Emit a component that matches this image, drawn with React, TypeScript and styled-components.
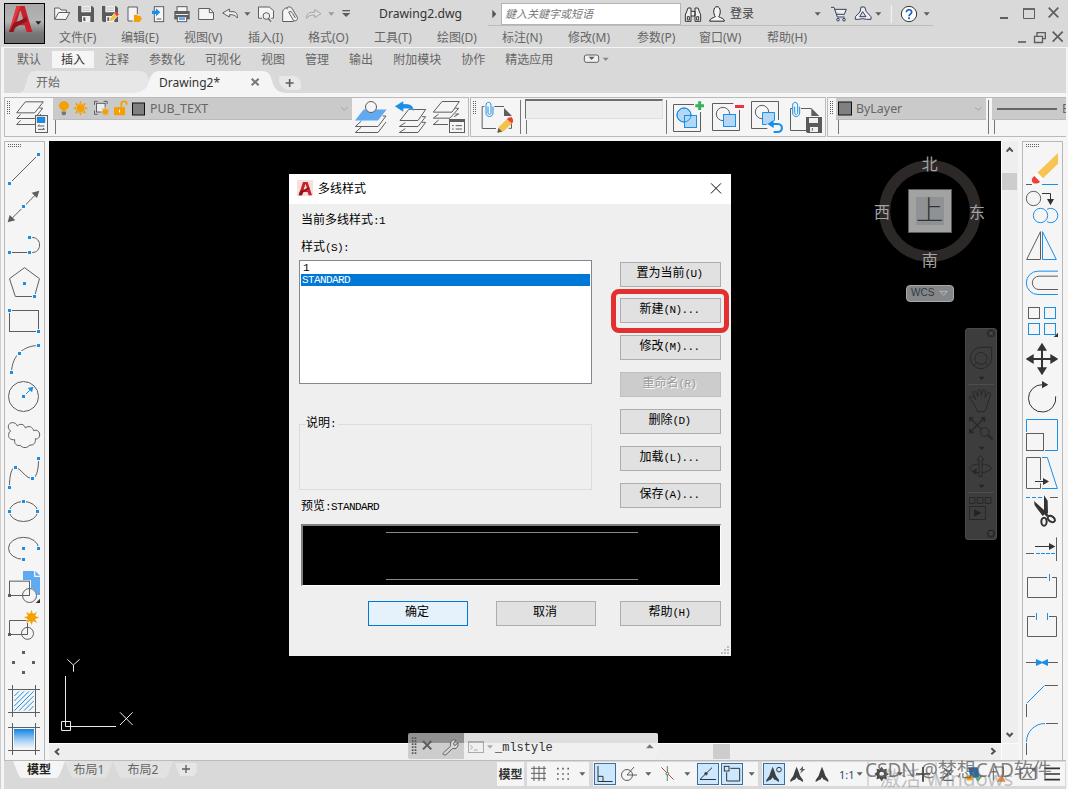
import React from 'react';
import styled, { createGlobalStyle, css } from 'styled-components';

const UI = '"Noto Sans", "Open Sans", "Noto Sans CJK SC", sans-serif';
const INK = '#5e5e5e';
const BLUE = '#1a8fe8';
const ORANGE = '#f4a000';
const DARK = '#333';

const Global = createGlobalStyle`
  html, body { margin: 0; padding: 0; }
  body { width: 1068px; height: 789px; overflow: hidden; background: #d9d9d9; font-family: ${UI}; font-size: 12px; color: #666; }
  *, *::before, *::after { box-sizing: border-box; }
`;

/* ---------- icon helpers: drawings use three units per pixel ---------- */

const Svg = styled.svg`
  display: block;
  flex: none;
  fill: none;
  stroke: ${INK};
  stroke-width: 3;
  overflow: visible;
`;

const Glyph = ({ box, children }: { box: string; children?: React.ReactNode }) => {
  const [, , w, h] = box.split(' ').map(Number);
  return (
    <Svg viewBox={box} width={w / 3} height={h / 3}>
      {children}
    </Svg>
  );
};

const Dot = ({ x, y, c = BLUE }: { x: number; y: number; c?: string }) => (
  <>
    <rect x={x - 7.5} y={y - 7.5} width="15" height="15" fill="#f5f5f5" stroke="none" />
    <rect x={x - 4.5} y={y - 4.5} width="9" height="9" fill={c} stroke="none" />
  </>
);

const Fill = ({ d, c = DARK }: { d: string; c?: string }) => <path d={d} fill={c} stroke="none" />;

const star = (cx: number, cy: number, outer: number, inner: number, n: number) =>
  Array.from({ length: n * 2 }, (_, i) => {
    const r = i % 2 ? inner : outer;
    const a = (Math.PI * i) / n - Math.PI / 2;
    return `${cx + r * Math.cos(a)},${cy + r * Math.sin(a)}`;
  }).join(' ');

const Caret = ({ x, y, c = INK }: { x: number; y: number; c?: string }) => (
  <Fill d={`M${x - 9} ${y - 5} H${x + 9} L${x} ${y + 5} Z`} c={c} />
);

/* ---------- title bar ---------- */

const Shell = styled.div`
  display: flex;
  flex-direction: column;
  width: 1068px;
  height: 789px;
  overflow: hidden;
`;
const TitleBar = styled.header`
  display: flex;
  height: 47px;
  background: #d9d9d9;
`;
const AppButton = styled.div`
  flex: none;
  width: 41px;
  height: 41px;
  margin: 3px 5px 0 4px;
  border: 1px solid #000;
  background: linear-gradient(#a9a9a9, #b4b4b4 45%, #777 75%, #6e6e6e);
`;
const TitleRows = styled.div`
  flex: 1;
  display: flex;
  flex-direction: column;
`;
const Row = styled.div<{ $h: number }>`
  display: flex;
  height: ${(p) => p.$h}px;
`;
const FileTitle = styled.div`
  width: 134px;
  padding-left: 25px;
  line-height: 27px;
  font-size: 12.2px;
  color: #333;
`;
const InfoCenter = styled.div`
  display: flex;
  width: 445px;
  height: 26px;
  border-bottom: 1px solid #bcbcbc;
`;
const Search = styled.div`
  width: 180px;
  height: 22px;
  margin-top: 3px;
  padding-left: 3px;
  border: 1px solid #b4b4b4;
  background: #fff;
  line-height: 19px;
  font-size: 11px;
  font-style: italic;
  color: #777;
`;
const SignIn = styled.span`
  width: 27px;
  line-height: 27px;
  color: #444;
`;
const MenuRow = styled.nav`
  display: grid;
  grid-template-columns: 62px 63px 64px 60px 66px 63px 65px 66px 69px 62px 68px 60px;
  padding-left: 9px;
  line-height: 20px;
`;
const Push = styled.div`
  margin-left: auto;
  display: flex;
`;

const Floppy = ({ x }: { x: number }) => (
  <g transform={`translate(${x} 0)`} stroke="none">
    <path d="M0 18 H42 L48 24 V66 H4 L0 62 Z" fill="#5a5a5a" />
    <path d="M10 18 H39 V37 H10 Z M12 48 H37 V66 H12 Z" fill="#f0f0f0" />
    <path d="M13 24 H36 M13 31 H36" stroke="#aaa" strokeWidth="2" />
    <path d="M16 52 H22 V63 H16 Z" fill="#5a5a5a" />
  </g>
);

const QuickAccess = () => (
  <>
    <Glyph box="150 0 72 84">
      <path d="M164 57 V24 H178 L183 30 H199 V37 M164 58 L176 37.5 H209 L198 58.5 Z" fill="#f5f5f5" />
    </Glyph>
    <Glyph box="222 0 72 84"><Floppy x={234} /></Glyph>
    <Glyph box="294 0 72 84">
      <Floppy x={306} />
      <path d="M330 66 L329 56 L345 38 L355 46 L339 63 Z" fill="#f7c14e" stroke="#fff" strokeWidth="2" />
      <Fill d="M343 40 L349 35 L357 43 L351 49 Z" c="#ee4036" />
    </Glyph>
    <Glyph box="366 0 72 84">
      <path d="M412 42 V21 H384 V63 H398" fill="#f5f5f5" />
      <path d="M402 66 V44 H411 L414 48 H422 V54 M402 66 L409 53 H427 L419 66 Z" fill={ORANGE} stroke="none" />
    </Glyph>
    <Glyph box="438 0 72 84">
      <rect x="463" y="20" width="28" height="45" fill="#f5f5f5" />
      <path d="M470 57 H484" />
      <Fill d="M456 32 H468 V25 L481 37 L468 49 V42 H456 Z" c={BLUE} />
    </Glyph>
    <Glyph box="510 0 72 84">
      <rect x="531" y="20" width="30" height="16" fill="#f5f5f5" />
      <Fill d="M523 33 H569 V58 H523 Z" c={INK} />
      <Fill d="M527 42 H565 V45 H527 Z" c="#eee" />
      <rect x="532" y="50" width="28" height="15" fill="#f5f5f5" />
      <Fill d="M537 52 H555 V60 H537 Z" c="#5faaf0" />
    </Glyph>
    <Glyph box="582 0 72 84">
      <path d="M596 25.5 H629 L640.500 37 V58.5 H596 Z" fill="#f5f5f5" />
      <path d="M628 25 V38 H641" />
    </Glyph>
    <Glyph box="654 0 72 84">
      <path d="M668 39 L688 27 V35 H699 C710 36 713 43 712 54 C707 46 701 44 688 44 V51 Z" fill="#eee" />
    </Glyph>
    <Glyph box="726 0 36 84"><Caret x={742} y={42} /></Glyph>
    <Glyph box="762 0 72 84">
      <path d="M786 54.500 H775.500 V21 H808 L820.500 32 V54.500 H814" fill="#f5f5f5" />
      <circle cx="799" cy="48" r="10" fill="#eee" />
      <path d="M805 56 L813 65" strokeWidth="4" />
    </Glyph>
    <Glyph box="834 0 72 84">
      <path d="M848 33 V64.500 H880 V33 L870 24 H856 Z" fill="#f5f5f5" />
      <path d="M862 28 C858 20 870 18 876 25 L892 52 C894 62 884 66 879 59 L866 36 C870 32 876 36 878 40 L886 54" fill="#eee" />
    </Glyph>
    <Glyph box="906 0 75 84">
      <path d="M963 41 L944 29 V37 H934 C924 38 919 44 920 55 C925 47 931 45 944 45 V53 Z" fill="#ddd" stroke="#a6a6a6" />
    </Glyph>
    <Glyph box="981 0 36 84"><Caret x={994} y={42} c="#999" /></Glyph>
    <Glyph box="1017 0 45 84">
      <path d="M1027 32 H1050" strokeWidth="4" />
      <Fill d="M1026 39 H1051 L1038.500 51 Z" c={INK} />
    </Glyph>
  </>
);

const LogoA = ({ box }: { box: string }) => (
  <Glyph box={box}>
    <Fill d="M27 96 L50 18 H74 L97 96 H80 L74 76 H47 L40 96 Z" c="#c9202a" />
    <Fill d="M60 32 L50 66 C58 62 66 60 72 66 L62 32 Z" c="#a5a5a5" />
    <Fill d="M27 96 L34 74 C44 66 62 64 78 50 L82 62 C64 74 48 78 44 86 L40 96 Z" c="#8e161c" />
    <Fill d="M50 18 H62 L38 74 L27 96 Z" c="#e4383c" />
    <Caret x={115} y={69} c="#222" />
  </Glyph>
);

const menus = ['文件(F)', '编辑(E)', '视图(V)', '插入(I)', '格式(O)', '工具(T)', '绘图(D)', '标注(N)', '修改(M)', '参数(P)', '窗口(W)', '帮助(H)'];

const Title = () => (
  <TitleBar>
    <AppButton>
      <LogoA box="15 12 117 117" />
    </AppButton>
    <TitleRows>
      <Row $h={28}>
        <QuickAccess />
        <FileTitle>Drawing2.dwg</FileTitle>
        <InfoCenter>
          <Glyph box="414 0 39 75"><Fill d="M427 29 L439 42 L427 55 Z" c="#555" /></Glyph>
          <Search>鍵入关鍵字或短语</Search>
          <Glyph box="993 0 66 75">
            <g stroke="#333">
              <path d="M1006 64 V45 L1014 24 H1023 V64 Z M1035 64 V24 H1044 L1052 45 V64 Z M1023 34 H1035 V48 H1023" fill="#eee" />
              <path d="M1012 50 H1018 V60 H1012 Z M1040 50 H1046 V60 H1040 Z" fill="#fff" />
            </g>
          </Glyph>
          <Glyph box="-15 0 81 75">
            <path d="M5 63.500 C5 55 16 54 22 50 C15 42 15 20 27 20 C39 20 39 42 32 50 C38 54 49 55 49 63.500 Z" fill="#f4f4f4" stroke="#222" />
          </Glyph>
          <SignIn>登录</SignIn>
          <Glyph box="147 0 213 75"><Caret x={329} y={42} /></Glyph>
          <Glyph box="360 0 72 75">
            <g stroke="#34405e">
              <path d="M369 22 H378 L388 51 H410 M380 28 H415 L409 43 H386" fill="#eee" />
              <circle cx="390" cy="59" r="4" /><circle cx="408" cy="59" r="4" />
            </g>
          </Glyph>
          <Glyph box="432 0 120 75">
            <path d="M459 21 H470 L475 35 L489 50 V58 H476 L464 56 L452 58 H442 V50 L456 36 Z M464 35 L455 50 H474 Z" stroke="#34405e" fill="#eee" />
            <Caret x={511} y={42} />
            <path d="M550 15 V69" stroke="#f5f5f5" />
          </Glyph>
          <Glyph box="552 0 123 75">
            <circle cx="603" cy="42" r="23" fill="#fff" stroke="#333" />
            <path d="M595 37 C595 26 612 27 611 37 C610 43 603 42 603 49 M603 52 V58" stroke="#1a5fc0" strokeWidth="5" />
            <Caret x={656} y={42} />
          </Glyph>
        </InfoCenter>
        <Push>
          <Glyph box="867 0 213 84">
            <path d="M876 54 H900" strokeWidth="6" />
            <path d="M946.500 27 H979.500 V55.500 H946.500 Z" />
            <path d="M945 27 H981" strokeWidth="5" />
            <path d="M1022 23 L1051 52 M1051 23 L1022 52" strokeWidth="5" />
          </Glyph>
        </Push>
      </Row>
      <Row $h={19}>
        <MenuRow>{menus.map((m) => <span key={m}>{m}</span>)}</MenuRow>
        <Push>
          <Glyph box="921 84 159 57">
            <path d="M930 126 H954" strokeWidth="5" />
            <path d="M987 108 V98 H1012 V116 H1003 M979.500 109 H1003.500 V127.500 H979.500 Z" strokeWidth="4" />
            <path d="M1034 95 L1064 125 M1064 95 L1034 125" strokeWidth="5" />
          </Glyph>
        </Push>
      </Row>
    </TitleRows>
  </TitleBar>
);

/* ---------- ribbon and document tabs ---------- */

const Frame = styled.div`
  flex: 1;
  display: flex;
  flex-direction: column;
  padding: 1px 2px 0 3px;
  border-left: 1px solid #cfcfcf;
  background: #f5f5f5;
`;
const Ribbon = styled.nav`
  display: flex;
  height: 23px;
  padding: 3px 0 0 3px;
  background: #d9d9d9;
`;
const RibbonTab = styled.span<{ $on?: boolean }>`
  height: 17px;
  padding: 0 9px;
  margin: 0 1px;
  line-height: 17px;
  color: ${(p) => (p.$on ? '#333' : '#666')};
  background: ${(p) => (p.$on ? '#f5f5f5' : 'transparent')};
`;
const DocTabs = styled.div`
  display: flex;
  height: 22px;
  padding-left: 14px;
  background: #d9d9d9;
`;
const DocTab = styled.div<{ $on?: boolean }>`
  display: flex;
  height: 22px;
  line-height: 23px;
  ${(p) =>
    p.$on
      ? css`
          width: 159px;
          margin-left: -21px;
          padding-left: 28px;
          font-size: 12px;
          color: #333;
          background: #f5f5f5;
          clip-path: path('M0 22 C14 22 16 16 18 10 C20 4 22 0 29 0 H131 C140 0 140 8 142 13 C145 20 148 22 159 22 Z');
        `
      : css`
          width: 134px;
          padding-left: 18px;
          background: #e7e7e7;
          clip-path: path('M0 22 C6 22 7 16 9 9 C11 3 12 0 19 0 H121 C128 0 131 4 131 12 L134 22 Z');
        `}
`;
const NewTab = styled.div`
  width: 22px;
  height: 14px;
  margin: 5px 0 0 -11px;
  background: #e8e8e8;
  border-radius: 2px 8px 3px 10px;
`;

/* ---------- toolbar strip ---------- */

const Strip = styled.div`
  display: flex;
  gap: 1px;
  height: 40px;
  margin-top: 4px;
`;
const Bar = styled.div<{ $w: number; $open?: boolean }>`
  display: flex;
  width: ${(p) => p.$w}px;
  border: 1px solid #bababa;
  ${(p) => p.$open && 'border-right: 0;'}
  overflow: hidden;
`;
const Combo = styled.div<{ $w: number }>`
  flex: none;
  display: flex;
  align-items: center;
  width: ${(p) => p.$w}px;
  height: 22px;
  background: #cacaca;
  border-bottom: 1px solid #bbb;
  font-size: 12.4px;
`;
const ComboCell = styled.div`
  flex: none;
  &::after {
    content: '';
    display: block;
    height: 14px;
    margin-left: 2px;
    border-left: 1px solid #777;
  }
`;
const Field = styled.div`
  width: 138px;
  height: 20px;
  margin-top: 1px;
  border: 1px solid #dedede;
  border-top: 2px solid #707070;
  border-left: 1px solid #707070;
  background: #ededed;
`;
const FieldCell = styled.div`
  margin-left: 4px;
  &::after {
    content: '';
    display: block;
    height: 14px;
    margin: 1px 0 0 1px;
    border-left: 1px solid #777;
  }
`;
const Divider = styled.i<{ $l: number; $r: number }>`
  flex: none;
  width: 1px;
  height: 34px;
  margin: 2px ${(p) => p.$r}px 0 ${(p) => p.$l}px;
  background: #777;
`;
const Label = styled.span<{ $ml?: number }>`
  margin-left: ${(p) => p.$ml ?? 0}px;
`;

const GripV = ({ w }: { w: number }) => (
  <Glyph box={`0 0 ${w} 114`}>
    <path d="M7.500 9 V48 M13.500 9 V48" strokeDasharray="3 3" />
  </Glyph>
);

const Sheets = ({ x, y }: { x: number; y: number }) => (
  <g transform={`translate(${x} ${y})`}>
    <path d="M26 1.500 H80 L54 34.500 H0 Z" fill="#f5f5f5" />
    <path d="M68 20 L78 20.500 L54 51.500 H0 L12 39 M72 38 L54 69.500 H0 L12 57" />
  </g>
);

const Clip = ({ x, y }: { x: number; y: number }) => (
  <path
    transform={`translate(${x} ${y})`}
    d="M6 14 V32 C6 39 15 39 15 32 V10 C15 -2 0 -2 0 10 V33 C0 47 21 47 21 33 V14"
    stroke={BLUE}
    fill="none"
  />
);

const Toolbars = () => (
  <Strip>
    <Bar $w={465}>
      <Glyph box="15 294 30 114">
        <path d="M22.500 303 V342 M28.500 303 V342" strokeDasharray="3 3" />
      </Glyph>
      <Glyph box="45 294 114 114">
        <Sheets x={50} y={304} />
        <rect x="106.500" y="346.500" width="36" height="51" fill="#f5f5f5" />
        <rect x="112" y="352" width="22" height="15" fill={BLUE} stroke="#1877c8" />
        <path d="M114 378 H133 M118 374 L113 378 M114 388 H133 M129 384 L134 388" />
      </Glyph>
      <ComboCell>
        <Combo $w={299}>
          <Glyph box="159 295.500 291 63">
            <path d="M186 334 C186 328 177 327 177 320 C177 300 207 300 207 320 C207 327 198 328 198 334 Z" fill={ORANGE} stroke="none" />
            <Fill d="M185 336 H198 V343 L195 347 H188 L185 343 Z" c="#777" />
            <polygon points={star(241.5, 326, 23, 13, 8)} fill={ORANGE} stroke="none" />
            <circle cx="241.500" cy="326" r="13" fill={ORANGE} stroke="#cacaca" strokeWidth="2" />
            <path d="M283.500 316 V305.500 H293 M311 305.500 H321.500 V314 M283.500 333 V344.500 H293" />
            <rect x="289.500" y="311.500" width="26" height="26" fill="#eee" />
            <polygon points={star(316.500, 337, 15, 8, 8)} fill={ORANGE} stroke="#cacaca" strokeWidth="2" />
            <Fill d="M342 323 H375 V347 H342 Z" c={ORANGE} />
            <path d="M364 323 V311 C364 304 380 304 380 311 V316" stroke={ORANGE} strokeWidth="5" />
            <path d="M358.500 331 V339" stroke="#fff" />
            <rect x="397.500" y="310.500" width="36" height="36" fill="#808080" stroke="#111" />
          </Glyph>
          <Label>PUB_TEXT</Label>
          <Push><Glyph box="1008 295.500 48 63"><path d="M1023 323 L1033 332 L1043 323" stroke="#a2a2a2" /></Glyph></Push>
        </Combo>
      </ComboCell>
      <Glyph box="6 294 120 114">
        <path d="M41 328.500 H110 L84 361.500 H15 Z" fill="#5faaf0" stroke="none" />
        <circle cx="63" cy="321" r="16.500" fill="#f5f5f5" />
        <path d="M34 363 L16 379.500 H84 L108 348 M34 381 L16 397.500 H84 L108 366 M98 348 H108" />
      </Glyph>
      <Glyph box="126 294 114 114">
        <path d="M176 328.500 H227 L204 361.500 H150 Z M166 368 L148 379.500 H204 L227 350 H216 M166 386 L148 397.500 H204 L227 367 H216" />
        <path d="M134 319 L160 303 V312 C182 310 192 318 191 334 C184 326 176 325 160 326 V336 Z" fill={BLUE} stroke="#f5f5f5" strokeWidth="1" />
      </Glyph>
      <Glyph box="240 294 114 114">
        <path d="M276 304.500 H328 L306 336.500 H250 Z M266 342 L250 354.500 H300 L326 325 H316 M266 360 L250 373.500 H294 M312 350 L326 342 H316" />
        <rect x="298.500" y="358.500" width="45" height="39" fill="#f5f5f5" />
        <path d="M297 362 H345" strokeWidth="8" />
        <path d="M306 377 H311 M317 377 H336 M306 387 H311 M317 387 H336" />
      </Glyph>
    </Bar>
    <Bar $w={356}>
      <GripV w={24} />
      <Glyph box="387 294 114 114">
        <path d="M403 319.500 H396.500 V385.500 H438 M433 319.500 H462 M484.500 352 V385 H476" />
        <Fill d="M462 324 L486 348 H462 Z" c={INK} />
        <Clip x={408} y={306} />
        <Fill d="M442 398 L446 381 L472 356 L487 369 L461 394 Z" c="#f7c14e" />
        <Fill d="M471 358 C476 348 492 350 489 366 L486 370 Z" c="#ee4036" />
        <Fill d="M442 398 L445 384 L457 395 Z" c={INK} />
      </Glyph>
      <Divider $l={3} $r={0} />
      <FieldCell><Field /></FieldCell>
      <Divider $l={3} $r={3} />
      <Glyph box="960 294 117 114">
        <path d="M1032 313.500 H970.500 V394.500 H1051.500 V336" />
        <circle cx="1002" cy="345" r="21" fill="#b3d7f5" stroke={BLUE} />
        <rect x="1003.500" y="346.500" width="36" height="36" fill="#b3d7f5" stroke={BLUE} />
        <circle cx="1002" cy="345" r="21" stroke={BLUE} />
        <path d="M1036 317 H1062 M1049 304 V330" stroke="#35b15a" strokeWidth="9" />
      </Glyph>
      <Glyph box="3 294 114 114">
        <path d="M76 310.500 H13.500 V391.500 H94.500 V330" />
        <circle cx="45" cy="342" r="20" />
        <rect x="46.500" y="343.500" width="36" height="36" fill="#b3d7f5" stroke={BLUE} />
        <path d="M81 319.500 H108" stroke="#ee3338" strokeWidth="9" />
      </Glyph>
      <Glyph box="117 294 117 114">
        <path d="M178 385.500 H130.500 V304.500 H211.500 V360" />
        <circle cx="162" cy="336" r="20" />
        <path d="M176 373.500 H163.500 V337.500 H199.500 V362" fill="#b3d7f5" stroke={BLUE} />
        <path d="M188 372 H210 C225 372 227 396 208 396 H197" stroke={BLUE} strokeWidth="6" />
        <Fill d="M178 372 L197 360 V384 Z" c={BLUE} />
      </Glyph>
      <Glyph box="234 294 114 114">
        <path d="M252 325.500 H247.500 V391.500 H294 M279 325.500 H310" />
        <Fill d="M310 324 L334 348 H310 Z" c={INK} />
        <Clip x={254} y={306} />
        <Fill d="M294 351 H342 V399 H298 L294 395 Z" c="#5a5a5a" />
        <Fill d="M303 354 H330 V369 H303 Z M306 381 H330 V396 H306 Z" c="#f0f0f0" />
        <path d="M313 384 V392" />
      </Glyph>
    </Bar>
    <Bar $w={239} $open>
      <GripV w={24} />
      <ComboCell>
        <Combo $w={150}>
          <Glyph box="384 295.500 57 63">
            <rect x="391.500" y="307.500" width="39" height="39" fill="#808080" stroke="#111" />
          </Glyph>
          <Label $ml={1}>ByLayer</Label>
          <Push><Glyph box="786 295.500 48 63"><path d="M801 323 L811 332 L821 323" stroke="#a2a2a2" /></Glyph></Push>
        </Combo>
      </ComboCell>
      <Divider $l={2} $r={3} />
      <ComboCell>
        <Combo $w={74}>
          <Glyph box="852 295.500 210 63"><path d="M867 328.500 H1047" stroke="#000" /></Glyph>
          <Label>ByLayer</Label>
        </Combo>
      </ComboCell>
    </Bar>
  </Strip>
);

/* ---------- side tool palettes ---------- */

const Body = styled.div`
  flex: none;
  display: flex;
  gap: 4px;
  height: 619px;
  margin-top: 4px;
`;
const Palette = styled.aside`
  flex: none;
  display: flex;
  flex-direction: column;
  width: 41px;
  border: 1px solid #b8b8b8;
  border-bottom: 0;
  overflow: hidden;
`;

const GripH = () => (
  <Glyph box="15 21 117 24">
    <path d="M24 28.500 H63 M24 34.500 H63" strokeDasharray="3 3" />
  </Glyph>
);

const DrawTools = () => (
  <Palette>
    <GripH />
    <Glyph box="15 45 117 114">
      <path d="M36 138 L108 66" />
      <Dot x={28.500} y={145.500} /><Dot x={115.500} y={58.500} />
    </Glyph>
    <Glyph box="15 159 117 114">
      <path d="M36 250 L106 180" />
      <Fill d="M118 167 L95 173 L111 189 Z M23 262 L29 240 L46 256 Z" c={INK} />
      <Dot x={70.500} y={214.500} />
    </Glyph>
    <Glyph box="15 273 117 114">
      <path d="M28 352.500 H97 C126 352 126 308 97 307.500 H88" />
      <Dot x={28.500} y={352.500} /><Dot x={88.500} y={352.500} /><Dot x={88.500} y={307.500} />
    </Glyph>
    <Glyph box="15 387 117 114">
      <path d="M73.500 398 L118.500 431 L103.500 484.500 H46 L28.500 431 Z" />
      <Dot x={73.500} y={445.500} /><Dot x={103.500} y={484.500} />
    </Glyph>
    <Glyph box="15 501 117 114">
      <rect x="28.500" y="526.500" width="87" height="63" />
      <Dot x={28.500} y={526.500} /><Dot x={115.500} y={589.500} />
    </Glyph>
    <Glyph box="15 615 117 114">
      <path d="M34.500 712 C36 660 72 632 115 631.500" />
      <Dot x={34.500} y={712.500} /><Dot x={58.500} y={655.500} /><Dot x={115.500} y={631.500} />
    </Glyph>
    <Glyph box="15 729 117 114">
      <circle cx="70.500" cy="784.500" r="45" />
      <Dot x={70.500} y={784.500} />
      <path d="M78 777 L91 764" stroke={BLUE} />
      <Fill d="M100 755 L83 759 L96 772 Z" c={BLUE} />
    </Glyph>
    <Glyph box="15 843 117 114">
      <path d="M32 888 C20 880 24 862 38 863 C46 863 50 868 52 873 C60 864 74 868 76 879 C86 870 98 876 101 887 C112 882 120 892 119 900 C118 910 112 913 106 911 C108 924 100 932 89 930 C84 940 66 940 61 931 C50 934 42 926 44 914 C32 916 24 908 26 898 C27 892 29 889 32 888" />
    </Glyph>
    <Glyph box="15 -18 117 114">
      <path d="M28.500 82 C28 50 34 20 46.500 22 C66 28 78 57 97.500 55.500 C112 52 116 20 115.500 -4" />
      <Dot x={115.500} y={-4.500} /><Dot x={46.500} y={22.500} /><Dot x={97.500} y={55.500} /><Dot x={28.500} y={82.500} />
    </Glyph>
    <Glyph box="15 96 117 114">
      <ellipse cx="70.500" cy="154.500" rx="42" ry="30" />
      <Dot x={70.500} y={124.500} /><Dot x={28.500} y={154.500} /><Dot x={112.500} y={154.500} />
    </Glyph>
    <Glyph box="15 210 117 114">
      <path d="M115.500 265 A45 33 0 1 0 70.500 298" />
      <Dot x={70.500} y={265.500} /><Dot x={115.500} y={265.500} /><Dot x={70.500} y={298.500} />
    </Glyph>
    <Glyph box="15 324 117 114">
      <Fill d="M69 333 H102 V351 H120 V405 H112 C108 392 100 385 93 384 V360 H69 Z M106 333 L120 347 H106 Z" c="#5faaf0" />
      <rect x="28.500" y="363.500" width="60" height="43" />
      <circle cx="88.500" cy="406.500" r="21" />
      <rect x="24" y="402" width="9" height="9" fill={INK} stroke="none" />
      <Fill d="M120 416 V429 H107 Z" />
    </Glyph>
    <Glyph box="15 438 117 114">
      <path d="M82.500 481.500 H28.500 V523.500 H82.500 V488" />
      <circle cx="82.500" cy="520" r="18" />
      <polygon points={star(94.500, 472.500, 25, 13, 8)} fill={ORANGE} stroke="#f5f5f5" strokeWidth="2" />
      <rect x="24" y="519" width="9" height="9" fill={INK} stroke="none" />
    </Glyph>
    <Glyph box="15 552 117 114">
      <Dot x={70.500} y={577.500} c={INK} /><Dot x={40.500} y={607.500} c={INK} /><Dot x={100.500} y={607.500} c={INK} /><Dot x={70.500} y={637.500} c={INK} />
    </Glyph>
    <Glyph box="15 666 117 114">
      <path d="M37.500 675 V771 M106.500 675 V771 M24 688.500 H120 M24 757.500 H120" />
      <path d="M43 708 L57 694 M43 723 L72 694 M43 738 L87 694 M43 752 L101 694 M57 752 L101 708 M72 752 L101 723 M87 752 L101 738" stroke={BLUE} />
    </Glyph>
    <Glyph box="15 780 117 114">
      <defs>
        <linearGradient id="fade" x2="0" y2="1">
          <stop offset="0" stopColor="#0d86e0" /><stop offset=".3" stopColor="#5faaf0" /><stop offset=".65" stopColor="#b3d7f5" /><stop offset="1" stopColor="#f5f5f5" />
        </linearGradient>
      </defs>
      <path d="M37.500 789 V885 M106.500 789 V885 M24 802.500 H120 M24 871.500 H120" />
      <rect x="42" y="807" width="60" height="58" fill="url(#fade)" stroke="none" />
    </Glyph>
  </Palette>
);

const ModifyTools = () => (
  <Palette>
    <GripH />
    <Glyph box="465 45 117 114">
      <Fill d="M570 54 V86 L525 130 L508 113 Z" c="#f9c352" />
      <Fill d="M508 113 L525 130 L515 141 L498 124 Z" c="#fff" />
      <Fill d="M499 123 L516 140 C508 149 495 146 493 141 C489 135 493 128 499 123 Z" c="#ee4036" />
      <path d="M474 148.500 H492" /><path d="M522 148.500 H570" stroke={BLUE} />
    </Glyph>
    <Glyph box="465 159 117 114">
      <circle cx="496.500" cy="190.500" r="21.500" />
      <path d="M522 175.500 H547.500 V195" stroke={DARK} />
      <Fill d="M537 192 H558 L547.500 211 Z" />
      <g stroke={BLUE}>
        <circle cx="517.500" cy="241.500" r="21.500" />
        <path d="M537 223 A21.500 21.500 0 1 1 537 260" />
      </g>
    </Glyph>
    <Glyph box="465 273 117 114">
      <path d="M517.500 290 V373.500 H476 Z" />
      <path d="M523.500 290 V373.500 H565 Z" stroke={BLUE} />
    </Glyph>
    <Glyph box="465 387 117 114">
      <path d="M570 408.500 H510 A35 35 0 0 0 510 478.500 H570" stroke={BLUE} />
      <path d="M570 423.500 H513 A20 20 0 0 0 513 463.500 H570" />
    </Glyph>
    <Glyph box="465 501 117 114">
      <rect x="481.500" y="517.500" width="33" height="33" />
      <g stroke={BLUE}>
        <rect x="529.500" y="517.500" width="33" height="33" /><rect x="481.500" y="565.500" width="33" height="33" /><rect x="529.500" y="565.500" width="33" height="33" />
      </g>
      <Fill d="M570 593 V606 H557 Z" />
    </Glyph>
    <Glyph box="465 615 117 114">
      <path d="M522 640 V704 M490 672 H554" stroke={DARK} strokeWidth="6" />
      <Fill d="M522 623 L537 647 H507 Z M522 721 L537 697 H507 Z M473 672 L497 657 V687 Z M571 672 L547 657 V687 Z" />
    </Glyph>
    <Glyph box="249 174 117 114">
      <path d="M347 229 A41 41 0 1 1 308 194" stroke={DARK} />
      <Fill d="M306 183 V205 L325 194 Z" />
    </Glyph>
    <Glyph box="249 288 117 114">
      <path d="M259.500 336 V298.500 H352.500 V391.500 H315" stroke={BLUE} />
      <rect x="259.500" y="340.500" width="51" height="51" />
    </Glyph>
    <Glyph box="249 402 117 114">
      <path d="M301.500 480 V412.500 H259.500 V505.500 H301.500 V490" />
      <path d="M306 412.500 H322 L352 505.500 H306" stroke={BLUE} />
      <path d="M285 484.500 H312" stroke={DARK} />
      <Fill d="M309 474 V495 L327 484.500 Z" />
    </Glyph>
    <Glyph box="249 516 117 114">
      <path d="M258 532.500 H306" stroke={BLUE} strokeDasharray="12 6" /><path d="M330 532.500 H354" />
      <Fill d="M282 543 L312 570 L318 580 L308 588 L284 556 Z M312 526 L323 542 L324 580 L312 580 Z" />
      <ellipse cx="312" cy="605" rx="8" ry="12" stroke={DARK} strokeWidth="6" />
      <ellipse cx="334" cy="597" rx="12" ry="8" stroke={DARK} strokeWidth="6" transform="rotate(35 334 597)" />
      <path d="M316 578 L322 588" stroke={DARK} strokeWidth="8" />
    </Glyph>
    <Glyph box="465 -60 117 114">
      <path d="M474 10.500 H498 M565.500 -38 V33" /><path d="M504 10.500 H561" stroke={BLUE} strokeDasharray="12 3" />
      <path d="M501 -10.500 H548" stroke={DARK} />
      <Fill d="M543 -21 V0 L562 -10.500 Z" />
    </Glyph>
    <Glyph box="465 54 117 114">
      <path d="M537 82.500 H478.500 V142.500 H565.500 V82.500 H552" /><path d="M544.500 72 V93" stroke={BLUE} />
    </Glyph>
    <Glyph box="465 168 117 114">
      <path d="M501 199.500 H478.500 V259.500 H565.500 V199.500 H543" /><path d="M505.500 189 V210 M538.500 189 V210" stroke={BLUE} />
    </Glyph>
    <Glyph box="465 282 117 114">
      <path d="M474 337.500 H504 M540 337.500 H570" />
      <Fill d="M504 327 L522 335 L540 327 V348 L522 340 L504 348 Z" c={BLUE} />
    </Glyph>
    <Glyph box="465 396 117 114">
      <path d="M530 406.500 H570 M475.500 462 V501" /><path d="M477 459 L528 408" stroke={BLUE} />
    </Glyph>
    <Glyph box="465 510 117 114">
      <path d="M534 520.500 H570 M475.500 579 V615" /><path d="M475.500 576 A55 55 0 0 1 531 520.500" stroke={BLUE} />
    </Glyph>
  </Palette>
);

/* ---------- drawing area ---------- */

const Viewport = styled.main`
  position: relative;
  display: grid;
  grid-template-columns: 952px 16px;
  grid-template-rows: 602px 16px;
  gap: 1px;
  width: 969px;
  background: #fdfdfd;
`;
const Canvas = styled.div`
  position: relative;
  background: #000;
`;
const VScroll = styled.div`
  display: flex;
  flex-direction: column;
  justify-content: space-between;
  background: #eee;
`;
const HScroll = styled.div`
  display: flex;
  justify-content: space-between;
  background: #eee;
`;
const Thumb = styled.i<{ $mt?: number; $mr?: number; $ml?: number; $mb?: number }>`
  flex: none;
  width: ${(p) => (p.$mt ? 15 : 17)}px;
  height: ${(p) => (p.$mt ? 17 : 15)}px;
  margin: ${(p) => p.$mt ?? 0}px ${(p) => p.$mr ?? 0}px ${(p) => p.$mb ?? 0}px ${(p) => p.$ml ?? 0}px;
  background: #cdcdcd;
`;
const Corner = styled.div`
  background: #f2f2f2;
`;
const Pin = styled.div<{ $x: number; $y: number }>`
  position: absolute;
  left: ${(p) => p.$x}px;
  top: ${(p) => p.$y}px;
`;
const Wcs = styled.div`
  display: flex;
  width: 48px;
  height: 17px;
  padding-left: 4px;
  border: 1px solid #a6a8aa;
  border-radius: 4px;
  background: #84878a;
  font: 10px/14px "Liberation Sans", sans-serif;
  color: #35383a;
`;
const NavBar = styled.div`
  width: 32px;
  height: 212px;
  border: 1px solid #4a4a4a;
  border-radius: 3px;
  background: #3d3d3d;
`;

const ViewCube = () => (
  <Glyph box="15 60 342 345">
    <circle cx="186" cy="228" r="136" stroke="#2d2828" strokeWidth="33" />
    <rect x="121.500" y="163.500" width="129" height="129" fill="#a0a3a2" stroke="#5a5a5a" />
    <rect x="144" y="186" width="84" height="84" fill="#8f9294" stroke="none" />
    <g fill="#a3a3a3" stroke="none" fontSize="48" textAnchor="middle" fontFamily='"Noto Sans CJK SC", sans-serif'>
      <text x="185" y="105">北</text>
      <text x="185" y="393">南</text>
      <text x="42" y="248">西</text>
      <text x="327" y="248">东</text>
      <text x="185" y="254" fontSize="82" fontWeight="300" fill="#333">上</text>
    </g>
  </Glyph>
);

const NavIcons = () => (
  <Glyph box="78 27 90 630">
    <g stroke="#282828">
      <circle cx="153" cy="40" r="11" fill="#2f2f2f" /><path d="M148 35 L158 45 M158 35 L148 45" stroke="#555" />
      <path d="M123 82 H155 V115 A32 32 0 1 1 123 82" /><circle cx="123" cy="115" r="18" /><path d="M110 128 L100 138 M136 128 L146 138" />
      <path d="M100 250 C92 238 86 234 88 231 C96 226 102 234 108 239 L98 218 C102 210 108 214 114 230 L113 212 C119 205 123 210 124 228 L128 211 C136 206 138 214 135 232 L144 218 C152 214 154 220 148 236 C142 252 140 264 134 275 H112 C108 264 106 258 100 250 Z" />
      <path d="M90 294 L133 337 M133 294 L90 337" strokeWidth="4" /><Fill d="M87 291 H103 L87 307 Z M136 291 H120 L136 307 Z M87 340 H103 L87 324 Z" c="#282828" />
      <circle cx="134" cy="336" r="13" fill="#3d3d3d" /><path d="M144 346 L158 358" strokeWidth="6" />
      <ellipse cx="121" cy="445" rx="32" ry="13" /><path d="M117 470 V420 H111 L121 406 L132 420 H126 V470 Z" fill="#3d3d3d" /><Fill d="M95 455 L110 444 V466 Z" c="#282828" />
      <path d="M88.500 532.500 H105 V550 H88.500 Z M112 532.500 H129 V550 H112 Z M136 532.500 H153 V550 H136 Z M88.500 559.500 H136.500 V598.500 H88.500 Z" />
      <Fill d="M102 568 L124 579 L102 590 Z" c="#222" />
      <circle cx="153" cy="641" r="11" fill="#2f2f2f" /><path d="M147 638 H159 M149 644 H157" stroke="#555" />
    </g>
    <Caret x={125} y={175} c="#242424" /><Caret x={125} y={385} c="#242424" /><Caret x={125} y={499} c="#242424" />
    <path d="M84 193.500 H162 M84 517.500 H162" stroke="#4e4e4e" />
  </Glyph>
);

/* ---------- command line ---------- */

const CommandLine = styled.div`
  position: absolute;
  left: 359px;
  top: 592px;
  display: flex;
  width: 250px;
  height: 26px;
  border-radius: 2px;
  background: rgba(194, 194, 194, 0.75);
  overflow: hidden;
`;
const CommandInput = styled.div`
  display: flex;
  flex: 1;
  background: rgba(255, 255, 255, 0.7);
  font: 12px/31px "Liberation Mono", monospace;
  color: #333;
`;

/* ---------- multiline style dialog ---------- */

const Dialog = styled.section`
  position: absolute;
  left: 240px;
  top: 33px;
  width: 442px;
  height: 482px;
  background: #efefef;
  color: #000;
  font: 12px/14px "Liberation Mono", "Noto Sans CJK SC", monospace;
`;
const DialogTitle = styled.div`
  display: flex;
  height: 30px;
  background: #fff;
  line-height: 32px;
`;
const Mono = styled.span`
  font-size: 11px;
  letter-spacing: -0.6px;
`;
const Columns = styled.div`
  display: grid;
  grid-template-columns: 293px 101px;
  column-gap: 28px;
  height: 309px;
  padding-left: 10px;
`;
const LeftCol = styled.div`
  padding-top: 9px;
`;
const Text = styled.div<{ $mb?: number }>`
  height: 14px;
  margin: 0 0 ${(p) => p.$mb ?? 0}px 2px;
  line-height: 16px;
  white-space: nowrap;
`;
const List = styled.div`
  height: 124px;
  padding: 1px;
  border: 1px solid #828790;
  background: #fff;
`;
const Item = styled.div<{ $on?: boolean }>`
  height: 12px;
  padding-left: 2px;
  line-height: 13px;
  font-size: 11px;
  letter-spacing: -0.6px;
  ${(p) => p.$on && 'background: #0078d7; color: #fff; padding-left: 1px;'}
`;
const Group = styled.div`
  height: 66px;
  margin: 40px 0 9px;
  border: 1px solid #dcdcdc;
`;
const Legend = styled.span`
  display: block;
  width: 32px;
  height: 14px;
  margin: -9px 0 0 6px;
  background: #efefef;
  line-height: 16px;
`;
const ButtonCol = styled.div`
  display: flex;
  flex-direction: column;
  gap: 12px;
  padding-top: 58px;
`;
const Button = styled.div<{ $w?: number; $kind?: 'default' | 'off' }>`
  flex: none;
  width: ${(p) => p.$w ?? 101}px;
  height: 25px;
  padding-right: 2px;
  border: 1px solid #adadad;
  background: #e1e1e1;
  text-align: center;
  line-height: 23px;
  ${(p) => p.$kind === 'default' && 'border-color: #0078d7; background: #e5f1fb;'}
  ${(p) => p.$kind === 'off' && 'border-color: #bfbfbf; background: #ccc; color: #9a9a9a; text-shadow: 1px 1px #fff;'}
`;
const Marked = styled.div`
  position: relative;
  margin-top: -1px;
  &::after {
    content: '';
    position: absolute;
    left: -9px;
    top: -9px;
    width: 118px;
    height: 44px;
    border: 5px solid #e22f30;
    border-radius: 8px;
  }
`;
const Preview = styled.div`
  display: flex;
  flex-direction: column;
  justify-content: space-between;
  width: 420px;
  height: 62px;
  margin: 11px 0 15px 12px;
  padding: 6px 82px 5px 83px;
  border: 2px solid #777;
  border-color: #808080 #fff #fff #808080;
  border-right-width: 1px;
  border-bottom-width: 1px;
  background: #000;
`;
const Rule = styled.i`
  height: 1px;
  background: #8a8a8a;
`;
const Footer = styled.div`
  display: grid;
  grid-template-columns: 128px 124px 101px;
  padding-left: 79px;
`;
const Resize = styled.div`
  position: absolute;
  right: 2px;
  bottom: 2px;
`;

const MlstyleDialog = () => (
  <Dialog>
    <DialogTitle>
      <Glyph box="0 0 84 90">
        <rect x="24" y="18" width="48" height="48" fill="#f7dfde" stroke="none" />
        <Fill d="M29 64 L42 24 H56 L69 64 H59 L56 54 H42 L39 64 Z" c="#c9202a" />
        <Fill d="M49 31 L43 50 C48 46 53 46 56 50 L50 31 Z" c="#f7dfde" />
        <Fill d="M29 64 L33 51 C42 47 50 46 59 38 L61 45 C50 51 42 53 40 60 L39 64 Z" c="#8e161c" />
      </Glyph>
      <Label $ml={1}>多线样式</Label>
      <Push>
        <Glyph box="1260 0 78 90"><path d="M1278 28 L1308 58 M1308 28 L1278 58" stroke="#111" /></Glyph>
      </Push>
    </DialogTitle>
    <Columns>
      <LeftCol>
        <Text $mb={13}>当前多线样式<Mono>:1</Mono></Text>
        <Text $mb={6}>样式<Mono>(S):</Mono></Text>
        <List>
          <Item>1</Item>
          <Item $on>STANDARD</Item>
        </List>
        <Group><Legend>说明<Mono>:</Mono></Legend></Group>
        <Text>预览<Mono>:STANDARD</Mono></Text>
      </LeftCol>
      <ButtonCol>
        <Button>置为当前<Mono>(U)</Mono></Button>
        <Marked><Button>新建<Mono>(N)...</Mono></Button></Marked>
        <Button>修改<Mono>(M)...</Mono></Button>
        <Button $kind="off">重命名<Mono>(R)</Mono></Button>
        <Button>删除<Mono>(D)</Mono></Button>
        <Button>加载<Mono>(L)...</Mono></Button>
        <Button>保存<Mono>(A)...</Mono></Button>
      </ButtonCol>
    </Columns>
    <Preview><Rule /><Rule /></Preview>
    <Footer>
      <Button $w={100} $kind="default">确定</Button>
      <Button $w={100}>取消</Button>
      <Button>帮助<Mono>(H)</Mono></Button>
    </Footer>
    <Resize>
      <Glyph box="0 0 24 24">
        <Fill d="M18 0 H24 V6 H18 Z M18 9 H24 V15 H18 Z M18 18 H24 V24 H18 Z M9 9 H15 V15 H9 Z M9 18 H15 V24 H9 Z M0 18 H6 V24 H0 Z" c="#bcbcbc" />
      </Glyph>
    </Resize>
  </Dialog>
);

/* ---------- bottom bar ---------- */

const Bottom = styled.footer`
  position: relative;
  display: flex;
  height: 29px;
  border-top: 1px solid #bcbcbc;
  background: #d9d9d9;
`;
const Pad = styled.i`
  width: 9px;
`;
const LayoutTab = styled.div<{ $w: number; $on?: boolean }>`
  width: ${(p) => p.$w}px;
  height: 17px;
  text-align: center;
  line-height: 17px;
  background: ${(p) => (p.$on ? '#f5f5f5' : '#e2e2e2')};
  color: ${(p) => (p.$on ? '#222' : '#666')};
  ${(p) => p.$on && 'font-weight: 700;'}
  clip-path: polygon(0 0, 100% 0, calc(100% - 5px) 13px, calc(100% - 8px) 100%, 8px 100%, 5px 13px);
`;
const Status = styled.div`
  display: flex;
  margin-left: auto;
  padding-top: 1px;
`;
const Cluster = styled.div<{ $w: number; $gap?: number }>`
  display: flex;
  align-items: center;
  width: ${(p) => p.$w}px;
  height: 24px;
  margin-right: ${(p) => p.$gap ?? 0}px;
  background: #f5f5f5;
`;
const ModelText = styled.b`
  width: 29px;
  text-align: center;
  color: #333;
  font-weight: 700;
`;
const Toggle = styled.div<{ $mr?: number; $ml?: number }>`
  flex: none;
  width: 22px;
  height: 22px;
  margin: 0 ${(p) => p.$mr ?? 0}px 0 ${(p) => p.$ml ?? 0}px;
  border: 1px solid #3e6d9c;
  background: #cce8ff;
`;
const Scale = styled.span`
  width: 18px;
  font-size: 11px;
  color: #2a4a78;
  white-space: nowrap;
`;
const Watermark = styled.div<{ $x: number; $y: number; $size: number; $c: string }>`
  position: absolute;
  left: ${(p) => p.$x}px;
  top: ${(p) => p.$y}px;
  font-size: ${(p) => p.$size}px;
  line-height: 24px;
  white-space: nowrap;
  color: ${(p) => p.$c};
`;

const Person = ({ x }: { x: number }) => (
  <Fill d={`M${x} 125 L${x + 6} 140 L${x + 10} 152 L${x + 19} 165 V171 L${x + 8} 164 H${x + 5} L${x} 157 L${x - 5} 164 H${x - 8} L${x - 19} 171 V165 L${x - 10} 152 L${x - 6} 140 Z`} c="#3f3f3f" />
);

const BottomBar = () => (
  <Bottom>
    <Pad />
    <LayoutTab $w={52} $on>模型</LayoutTab>
    <LayoutTab $w={48}>布局1</LayoutTab>
    <LayoutTab $w={60}>布局2</LayoutTab>
    <Glyph box="519 903 84 54">
      <Fill d="M525 909 H590 V938 L580 948 H540 Z" c="#e6e6e6" />
      <path d="M546 927 H570 M558 915 V939" strokeWidth="4" />
    </Glyph>
    <Status>
      <Cluster $w={27} $gap={3}><ModelText>模型</ModelText></Cluster>
      <Cluster $w={62} $gap={4}>
        <Glyph box="381 111 186 72">
          <path d="M402 123 V168 M417 123 V168 M432 123 V168 M393 130 H438 M393 145 H438 M393 160 H438" />
          <path d="M471 131 H507 M471 147 H507 M471 162 H507" strokeWidth="5" strokeDasharray="5 10.500" />
          <Caret x={547} y={147} />
        </Glyph>
      </Cluster>
      <Cluster $w={165} $gap={4}>
        <Toggle $ml={1}>
          <Glyph box="585 117 60 60"><path d="M594 123 V169.500 H638 M594 154 H609 V169" stroke={DARK} /></Glyph>
        </Toggle>
        <Glyph box="648 111 243 72">
          <circle cx="681" cy="150" r="16.500" /><path d="M681 150 L702 126 M681 150 H711" />
          <Caret x={745} y={147} />
          <path d="M784 127 L821 164" stroke="#d04040" /><path d="M802 123 V168" stroke="#35a050" /><circle cx="802" cy="146" r="4" fill="#fff" />
          <Caret x={862} y={147} />
        </Glyph>
        <Toggle $mr={2}>
          <Glyph box="24 117 60 60"><path d="M30 163.500 H78 M30 163 L66 128" stroke={DARK} /><circle cx="48" cy="146" r="4" fill={DARK} /></Glyph>
        </Toggle>
        <Toggle>
          <Glyph box="96 117 60 60"><path d="M121 130 H149 V168 H110 V142" stroke={DARK} /><rect x="103" y="124" width="14" height="14" stroke={DARK} /></Glyph>
        </Toggle>
        <Glyph box="159 111 48 72"><Caret x={185} y={147} /></Glyph>
      </Cluster>
      <Cluster $w={105} $gap={2}>
        <Toggle $ml={1}>
          <Glyph box="222 117 60 60"><Person x={248} /><circle cx="267" cy="134" r="7" stroke={DARK} /></Glyph>
        </Toggle>
        <Glyph box="285 111 162 72">
          <Person x={320} /><Fill d="M339 123 L328 136 H335 L330 146 L346 132 H339 Z" c={INK} />
          <Person x={396} />
        </Glyph>
        <Scale>1:1</Scale>
        <Glyph box="501 111 27 72"><Caret x={509} y={147} /></Glyph>
      </Cluster>
      <Cluster $w={66} $gap={2}>
        <Glyph box="537 111 198 72">
          <polygon points={star(575, 147, 22, 15, 8)} fill="#4a4a4a" stroke="none" /><circle cx="575" cy="147" r="7" fill="#f5f5f5" stroke="none" />
          <Caret x={630} y={147} />
          <path d="M678 147 H720 M699 126 V170" stroke={DARK} strokeWidth="5" />
        </Glyph>
      </Cluster>
      <Cluster $w={128} $gap={1}>
        <Glyph box="741 111 384 72">
          <path d="M756 166 L786 130 M762 130 L784 150 M760 166 H790" strokeWidth="4" />
          <Fill d="M834 127 H862 L868 158 H842 Z" c="#2a6aa8" /><Fill d="M830 152 H848 V166 H830 Z" c={ORANGE} />
          <path d="M858 158 L864 166 L874 154" stroke="#35b15a" strokeWidth="5" />
          <path d="M910 126 H940 V150 M910 130 V166" /><Fill d="M934 148 L947 170 H921 Z" c="#e8853a" />
          <path d="M992 130 H1036 V163 H992 Z M1016 150 L1032 133" /><Fill d="M1034 131 V142 L1023 131 Z" c={INK} />
          <path d="M1063 130 H1110 M1063 147 H1110 M1063 164 H1110" stroke={DARK} strokeWidth="5" />
        </Glyph>
      </Cluster>
    </Status>
    <Watermark $x={876} $y={5} $size={20.4} $c="rgba(140,140,140,.5)">激活 Windows</Watermark>
    <Watermark $x={861} $y={-3} $size={19} $c="rgba(90,90,90,.75)">CSDN @梦想CAD软件</Watermark>
  </Bottom>
);

/* ---------- page ---------- */

const ribbonTabs = ['默认', '插入', '注释', '参数化', '可视化', '视图', '管理', '输出', '附加模块', '协作', '精选应用'];

export default function App() {
  return (
    <Shell>
      <Global />
      <Title />
      <Frame>
        <Ribbon>
          {ribbonTabs.map((t, i) => (
            <RibbonTab key={t} $on={i === 1}>{t}</RibbonTab>
          ))}
          <Glyph box="639 153 150 54">
            <rect x="703" y="165" width="43" height="22" rx="6" fill="#f0f0f0" />
            <Caret x={725} y={175} /><Caret x={767} y={178} c="#888" />
          </Glyph>
        </Ribbon>
        <DocTabs>
          <DocTab>开始</DocTab>
          <DocTab $on>
            Drawing2*
            <Push><Glyph box="740 213 130 66"><path d="M754 236 L775 256 M775 236 L754 256" strokeWidth="6" stroke="#777" /></Glyph></Push>
          </DocTab>
          <NewTab>
            <Glyph box="838 228 66 42"><path d="M858 249 H882 M870 237 V261" strokeWidth="5" /></Glyph>
          </NewTab>
        </DocTabs>
        <Toolbars />
        <Body>
          <DrawTools />
          <Viewport>
            <Canvas>
              <Pin $x={9} $y={514}>
                <Glyph box="174 585 240 240">
                  <path d="M196.500 648 V799.500 H348 M184.500 784.500 H211.500 V811.500 H184.500 Z M202 598 L220 615 L239 598 M220.500 615 V635 M360 757 L398 795 M398 757 L360 795" stroke="#eaeaea" />
                </Glyph>
              </Pin>
              <Pin $x={824} $y={14}><ViewCube /></Pin>
              <Pin $x={857} $y={144}>
                <Wcs>WCS<Glyph box="201 453 54 48"><path d="M219 469 H241 L230 481 Z" stroke="#b5b8ba" /></Glyph></Wcs>
              </Pin>
              <Pin $x={916} $y={187}><NavBar><NavIcons /></NavBar></Pin>
            </Canvas>
            <VScroll>
              <Glyph box="402 18 48 48"><path d="M416 50 L425 40 L434 50" strokeWidth="6" stroke="#505050" /></Glyph>
              <Thumb $mt={10} $mb={534} />
              <Glyph box="402 537 48 42"><path d="M416 549 L425 558 L434 549" strokeWidth="6" stroke="#505050" /></Glyph>
            </VScroll>
            <HScroll>
              <Glyph box="147 852 48 48"><path d="M177 866 L167 875 L177 884" strokeWidth="6" stroke="#505050" /></Glyph>
              <Thumb $ml={648} $mr={256} />
              <Glyph box="354 582 45 48"><path d="M370 595 L380 604 L370 613" strokeWidth="6" stroke="#505050" /></Glyph>
            </HScroll>
            <Corner />
            <CommandLine>
              <Glyph box="24 24 168 78">
                <path d="M38 37 V87 M46.500 37 V87" strokeWidth="5" strokeDasharray="5 4" stroke="#555" />
                <path d="M69 48 L94 73 M94 48 L69 73" strokeWidth="6" />
                <path d="M130 84 L152 63 C148 50 158 42 168 46 L160 56 L164 62 L174 54 C176 66 168 74 158 70 L138 89 C132 92 127 88 130 84 Z" fill="#d8d8d8" />
              </Glyph>
              <CommandInput>
                <Glyph box="192 24 93 78">
                  <rect x="205.500" y="49.500" width="45" height="33" stroke="#aaa" /><path d="M205 52 H251 M211 61 L218 67 L211 73 M222 75 H233" stroke="#aaa" />
                  <Caret x={270} y={66} c="#aaa" />
                </Glyph>
                _mlstyle
                <Push><Glyph box="735 24 39 78"><Fill d="M738 70 L749 58 L761 70 Z" c="#777" /></Glyph></Push>
              </CommandInput>
            </CommandLine>
            <MlstyleDialog />
          </Viewport>
          <ModifyTools />
        </Body>
        <BottomBar />
      </Frame>
    </Shell>
  );
}
